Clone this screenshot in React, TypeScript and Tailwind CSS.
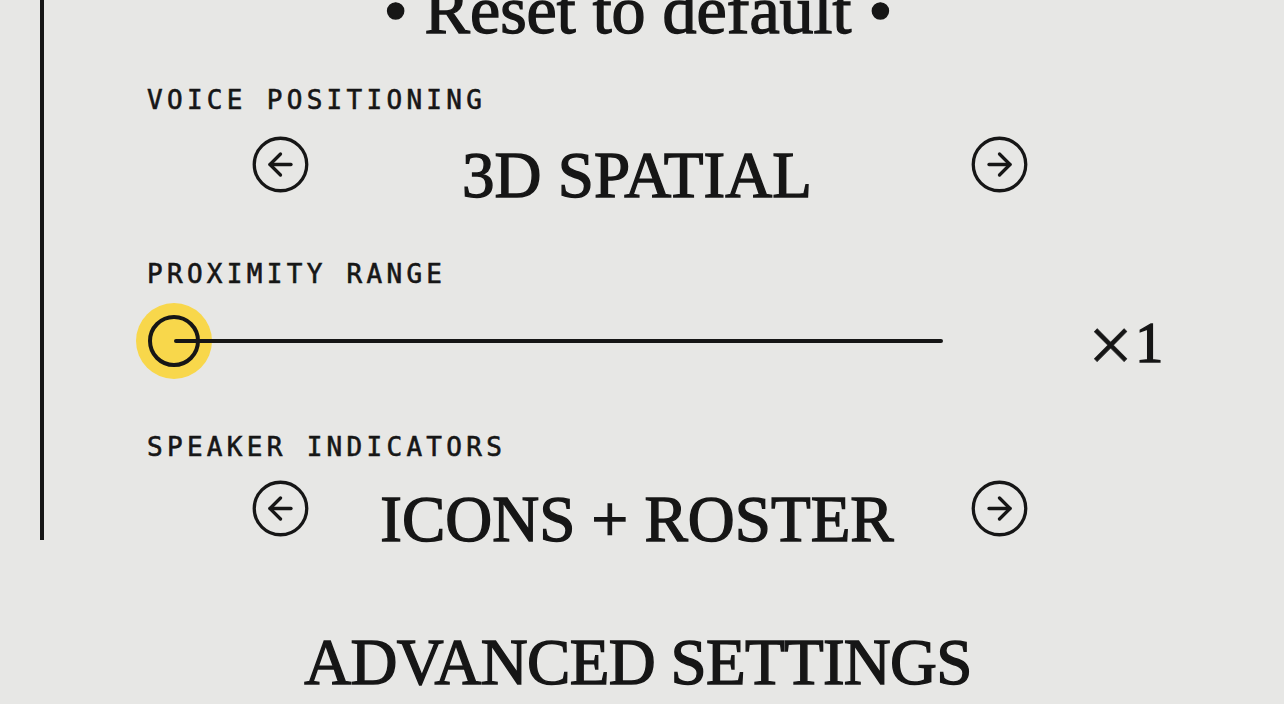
import React from "react";

const serif = { fontFamily: '"Liberation Serif", "Times New Roman", serif' };
const mono = { fontFamily: '"DejaVu Sans Mono", "Liberation Mono", monospace' };

function CircleArrow({ dir }: { dir: "left" | "right" }) {
  return (
    <svg width="63" height="63" viewBox="0 0 24 24" fill="none" stroke="#161616" strokeWidth="1.25" strokeLinecap="round" strokeLinejoin="round" className="shrink-0">
      <circle cx="12" cy="12" r="10" />
      {dir === "left" ? (
        <>
          <path d="M16 12H8" />
          <path d="M12 8l-4 4 4 4" />
        </>
      ) : (
        <>
          <path d="M8 12h8" />
          <path d="M12 16l4-4-4-4" />
        </>
      )}
    </svg>
  );
}

function Label({ children, className = "" }: { children: React.ReactNode; className?: string }) {
  return (
    <div style={mono} className={`text-[26px] leading-none h-[26px] tracking-[4.3px] uppercase text-[#161616] [-webkit-text-stroke:0.6px_#161616] ${className}`}>
      {children}
    </div>
  );
}

function Selector({ value, className = "" }: { value: string; className?: string }) {
  return (
    <div className={`ml-[102px] w-[782px] flex items-start ${className}`}>
      <div className="pt-[1px]">
        <CircleArrow dir="left" />
      </div>
      <div style={serif} className="flex-1 pr-[6px] text-center text-[65px] leading-none h-[65px] mt-[11px] text-[#161616] whitespace-nowrap [-webkit-text-stroke:1.4px_#161616]">
        {value}
      </div>
      <div className="pt-[1px]">
        <CircleArrow dir="right" />
      </div>
    </div>
  );
}

export default function App() {
  return (
    <div className="w-[1284px] h-[704px] overflow-hidden bg-[#e7e7e5] text-[#161616] flex flex-col">
      <div className="ml-[40px] mr-[52px] h-[540px] shrink-0 border-l-4 border-[#161616] flex flex-col">
        <div style={serif} className="mt-[-24px] h-[68px] text-[68px] leading-none text-center whitespace-nowrap [-webkit-text-stroke:1.4px_#161616]">
          • Reset to default •
        </div>
        <div className="pl-[103px] flex flex-col">
          <Label className="mt-[43px]">Voice Positioning</Label>
          <Selector value="3D SPATIAL" className="mt-[19px]" />
          <Label className="mt-[53px]">Proximity Range</Label>
          <div className="mt-[16px] ml-[-11px] h-[76px] flex items-center">
            <div className="relative w-[814px] h-[76px] shrink-0">
              <div className="absolute left-0 top-0 w-[76px] h-[76px] rounded-full bg-[#f8d74b]" />
              <div className="absolute left-[12px] top-[12px] w-[52px] h-[52px] rounded-full border-4 border-[#161616]" />
              <div className="absolute left-[38px] top-[36px] w-[769px] h-[4px] rounded-full bg-[#161616]" />
            </div>
            <div style={serif} className="ml-[138px] flex items-baseline leading-none whitespace-nowrap mt-[-12px] [-webkit-text-stroke:1.4px_#161616]">
              <span className="text-[80px] leading-none translate-y-[10px] [-webkit-text-stroke:0.6px_#161616]">×</span>
              <span className="text-[56px] leading-none ml-[2px]">1</span>
            </div>
          </div>
          <Label className="mt-[55px]">Speaker Indicators</Label>
          <Selector value="ICONS + ROSTER" className="mt-[16px]" />
        </div>
      </div>
      <div style={serif} className="mt-[90px] h-[65px] text-[65px] leading-none tracking-[-0.7px] text-center whitespace-nowrap pr-[8px] [-webkit-text-stroke:1.4px_#161616]">
        ADVANCED SETTINGS
      </div>
    </div>
  );
}
